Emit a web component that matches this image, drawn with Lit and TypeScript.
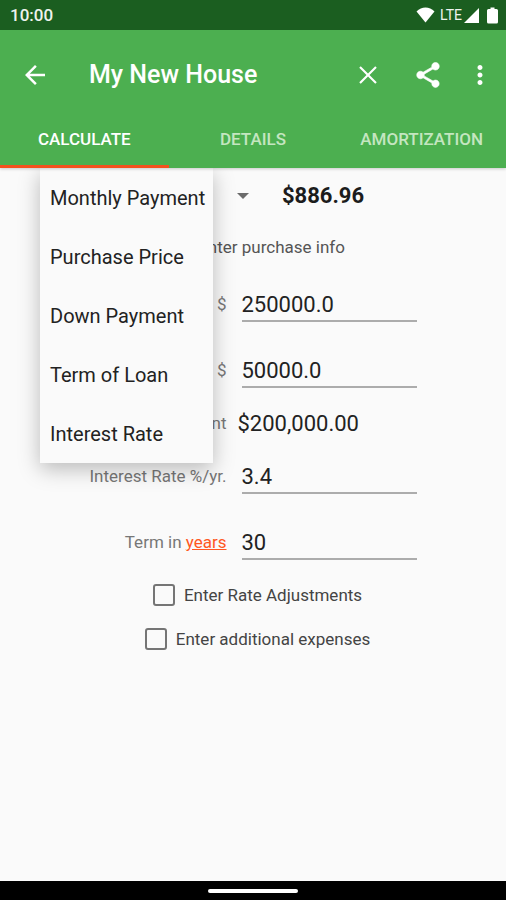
import { LitElement, html, css, svg } from "lit";
import { customElement, state } from "lit/decorators.js";
import { classMap } from "lit/directives/class-map.js";

const icon = (paths: unknown) =>
  html`<svg class="icon" viewBox="0 0 24 24" aria-hidden="true">${paths}</svg>`;

const BACK = svg`<path d="M20 11H7.83l5.59-5.59L12 4l-8 8 8 8 1.41-1.41L7.83 13H20v-2z"/>`;
const CLEAR = svg`<path d="M19 6.2 17.8 5 12 10.8 6.2 5 5 6.2l5.8 5.8L5 17.8 6.2 19l5.8-5.8 5.8 5.8 1.2-1.2-5.8-5.8z"/>`;
const SHARE = svg`<path d="M18 16.08c-.76 0-1.44.3-1.96.77L8.91 12.7c.05-.23.09-.46.09-.7s-.04-.47-.09-.7l7.05-4.11c.54.5 1.25.81 2.04.81 1.66 0 3-1.34 3-3s-1.34-3-3-3-3 1.34-3 3c0 .24.04.47.09.7L8.04 9.81C7.5 9.31 6.79 9 6 9c-1.66 0-3 1.34-3 3s1.34 3 3 3c.79 0 1.5-.31 2.04-.81l7.12 4.16c-.05.21-.08.43-.08.65 0 1.61 1.31 2.92 2.92 2.92s2.92-1.31 2.92-2.92-1.31-2.92-2.92-2.92z" stroke="#fff" stroke-width=".5"/>`;
const MORE = svg`<path d="M12 8c1.1 0 2-.9 2-2s-.9-2-2-2-2 .9-2 2 .9 2 2 2zm0 2c-1.1 0-2 .9-2 2s.9 2 2 2 2-.9 2-2-.9-2-2-2zm0 6c-1.1 0-2 .9-2 2s.9 2 2 2 2-.9 2-2-.9-2-2-2z"/>`;

const TABS = ["Calculate", "Details", "Amortization"];
const TARGETS = ["Monthly Payment", "Purchase Price", "Down Payment", "Term of Loan", "Interest Rate"];

@customElement("app-root")
export class AppRoot extends LitElement {
  static styles = css`
    :host {
      display: flex;
      flex-direction: column;
      min-height: 100vh;
      background: #fafafa;
      color: #222;
      font-family: Roboto, "Noto Sans", sans-serif;
      font-size: 17px;
      line-height: 24px;
    }
    * { box-sizing: border-box; }
    button, input, select { font: inherit; color: inherit; margin: 0; border-radius: 0; }
    button { background: none; border: 0; padding: 0; cursor: pointer; }
    header { position: relative; z-index: 2; color: #fff; background: #4caf50; box-shadow: 0 1px 3px rgba(0, 0, 0, 0.2); }
    .status {
      display: flex;
      align-items: center;
      height: 30px;
      padding: 0 8px 0 10px;
      background: #1b5e20;
      color: #eef3ee;
      font-weight: 500;
    }
    .clock { flex: 1; }
    .lte { font-size: 14px; font-weight: 400; margin: 0 2px 0 5px; }
    .wifi { width: 19px; height: 16px; fill: #fff; }
    .signal { width: 15px; height: 16px; fill: #fff; margin-right: 8px; }
    .battery { width: 11px; height: 17px; fill: #fff; }
    .bar { display: flex; align-items: center; height: 90px; padding: 0 11px 0 20px; }
    .bar h1 { flex: 1; margin: 0 0 0 39px; font-size: 25px; font-weight: 500; line-height: 32px; }
    .bar button { display: flex; }
    .icon { width: 30px; height: 30px; fill: #fff; }
    .actions { display: flex; gap: 30px; }
    .actions button:last-child { margin-left: -8px; }
    .tabs { display: grid; grid-template-columns: repeat(3, 1fr); }
    .tab {
      height: 48px;
      padding-bottom: 8px;
      border-bottom: 3px solid transparent;
      font-weight: 500;
      text-transform: uppercase;
      color: #c4e6c0;
    }
    .tab.active { color: #fff; border-color: #f4511e; }
    main { flex: 1; }
    .result { position: relative; display: flex; align-items: center; height: 56px; padding-left: 40px; }
    .target {
      width: 197px;
      padding: 0 10px;
      appearance: none;
      background: none;
      border: 0;
      font-size: 20px;
    }
    .caret { width: 12px; height: 6px; fill: #6b6b6b; }
    .amount { margin-left: 33px; font-size: 22px; font-weight: 700; color: #1c1c1c; }
    .menu {
      position: absolute;
      top: 0;
      left: 40px;
      z-index: 1;
      width: 173px;
      background: #fafafa;
      box-shadow: 0 6px 20px rgba(0, 0, 0, 0.26);
    }
    .option { display: block; width: 100%; height: 59px; padding: 0 10px; font-size: 20px; text-align: left; white-space: nowrap; }
    .hint { margin: 0; height: 47px; line-height: 47px; text-align: center; color: #555; }
    .fields { display: grid; grid-template-columns: 141px auto; justify-content: center; align-items: center; column-gap: 11px; }
    .label { text-align: right; white-space: nowrap; color: #777; }
    .label a { color: #ff5722; }
    .cell { display: flex; align-items: center; height: 66px; }
    .cell input {
      width: 175px;
      height: 36px;
      margin: 0 4px;
      padding: 2px 0 0;
      border: 0;
      border-bottom: 2px solid #acacac;
      background: none;
      outline: 0;
      font-size: 22px;
    }
    .loan { height: 40px; line-height: 42px; font-size: 22px; }
    .checks { display: grid; gap: 4px; justify-items: center; padding-left: 9px; }
    .check { display: flex; align-items: center; gap: 9px; height: 40px; color: #444; }
    .check input {
      appearance: none;
      width: 22px;
      height: 22px;
      border: 2px solid #757575;
      border-radius: 3px;
    }
    .check input:checked { background: #4caf50; }
    .nav { display: flex; align-items: center; justify-content: center; height: 19px; background: #000; }
    .handle { width: 90px; height: 4px; border-radius: 2px; background: #fff; }
  `;

  @state() private tab = 0;
  @state() private open = true;
  @state() private target = TARGETS[0];

  private choose(t: string) {
    this.target = t;
    this.open = false;
  }

  private field(id: string, label: unknown, value: string) {
    return html`
      <label class="label" for=${id}>${label}</label>
      <div class="cell"><input id=${id} type="text" inputmode="decimal" .value=${value} /></div>
    `;
  }

  render() {
    return html`
      <header>
        <div class="status">
          <span class="clock">10:00</span>
          <svg class="wifi" viewBox="0 0 19 16" aria-hidden="true"><path d="M9.500 15.500 0.500 4.500Q4.500 0.500 9.500 0.500T18.500 4.500Z" /></svg>
          <span class="lte">LTE</span>
          <svg class="signal" viewBox="0 0 15 16" aria-hidden="true"><path d="M0 16 15 1V16Z" /></svg>
          <svg class="battery" viewBox="0 0 11 17" aria-hidden="true"><path d="M3.500 0.500H7.500V2H9.500Q11 2 11 3.500V15Q11 16.500 9.500 16.500H1.500Q0 16.500 0 15V3.500Q0 2 1.500 2H3.500Z" /></svg>
        </div>
        <div class="bar">
          <button type="button" aria-label="Back">${icon(BACK)}</button>
          <h1>My New House</h1>
          <div class="actions">
            <button type="button" aria-label="Clear">${icon(CLEAR)}</button>
            <button type="button" aria-label="Share">${icon(SHARE)}</button>
            <button type="button" aria-label="More options">${icon(MORE)}</button>
          </div>
        </div>
        <nav class="tabs">
          ${TABS.map(
            (t, i) => html`<button
              type="button"
              class=${classMap({ tab: true, active: i === this.tab })}
              @click=${() => (this.tab = i)}
            >${t}</button>`
          )}
        </nav>
      </header>
      <main>
        <div class="result">
          <select
            class="target"
            aria-label="Value to calculate"
            .value=${this.target}
            @mousedown=${(e: Event) => {
              e.preventDefault();
              this.open = !this.open;
            }}
          >
            ${TARGETS.map((t) => html`<option ?selected=${t === this.target}>${t}</option>`)}
          </select>
          <svg class="caret" viewBox="0 0 12 6" aria-hidden="true"><path d="M0 0H12L6 6Z" /></svg>
          <output class="amount">$886.96</output>
          ${this.open
            ? html`<div class="menu" role="listbox">
                ${TARGETS.map(
                  (t) => html`<button
                    type="button"
                    class="option"
                    role="option"
                    aria-selected=${t === this.target}
                    @click=${() => this.choose(t)}
                  >${t}</button>`
                )}
              </div>`
            : null}
        </div>
        <p class="hint">First enter purchase info</p>
        <form class="fields">
          ${this.field("price", "Purchase Price $", "250000.0")}
          ${this.field("down", "Down Payment $", "50000.0")}
          <span class="label">Loan Amount</span>
          <output class="loan">$200,000.00</output>
          ${this.field("rate", "Interest Rate %/yr.", "3.4")}
          ${this.field("term", html`Term in <a href="#years">years</a>`, "30")}
        </form>
        <div class="checks">
          <label class="check"><input type="checkbox" />Enter Rate Adjustments</label>
          <label class="check"><input type="checkbox" />Enter additional expenses</label>
        </div>
      </main>
      <footer class="nav"><div class="handle"></div></footer>
    `;
  }
}
